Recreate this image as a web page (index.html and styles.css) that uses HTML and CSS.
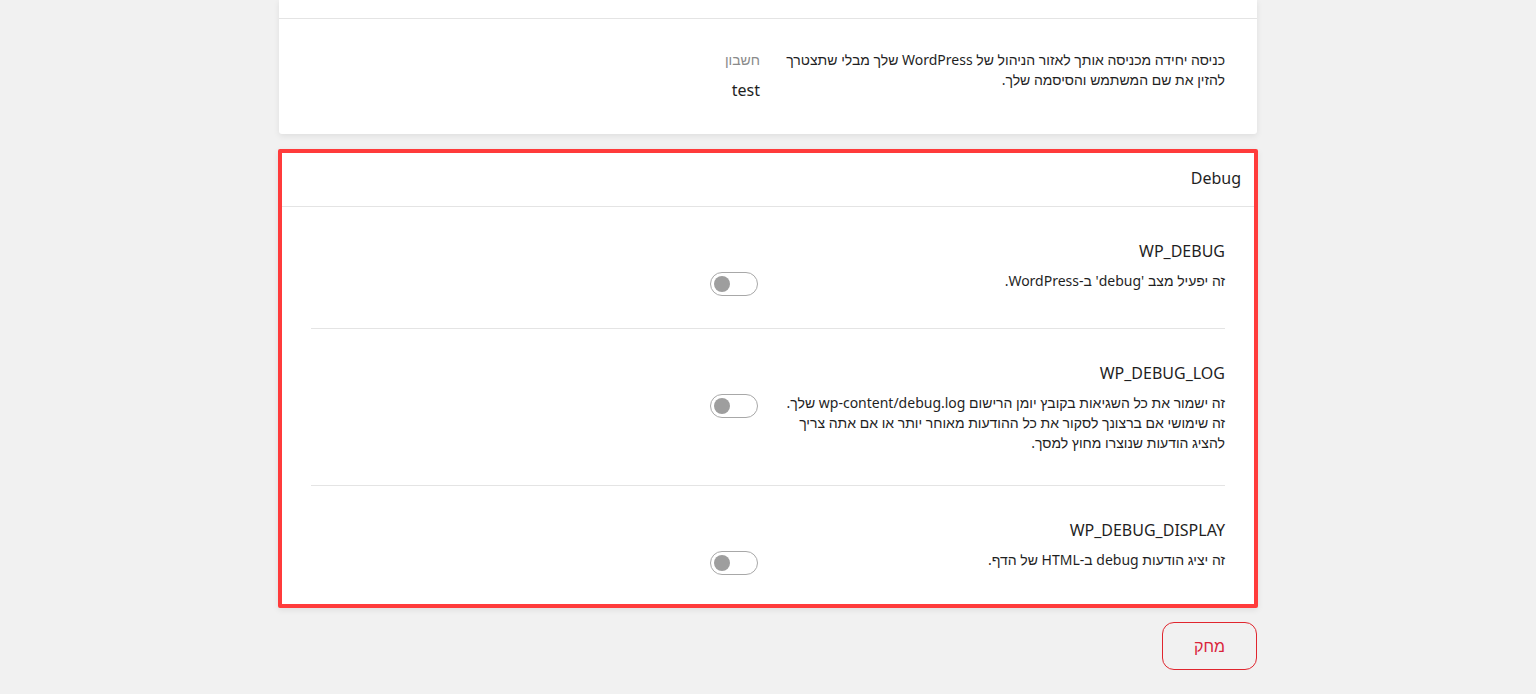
FILE: index.html
```html
<!DOCTYPE html>
<html lang="he" dir="rtl">
<head>
<meta charset="utf-8">
<title>Debug</title>
<link rel="stylesheet" href="styles.css">
</head>
<body>
<main class="page">
  <section class="card card-top">
    <div class="card-head-cut"></div>
    <div class="card-body">
      <div class="grid">
        <div class="col-text">
          <p class="desc">כניסה יחידה מכניסה אותך לאזור הניהול של WordPress שלך מבלי שתצטרך להזין את שם המשתמש והסיסמה שלך.</p>
        </div>
        <div class="col-field">
          <div class="field-label">חשבון</div>
          <div class="field-value">test</div>
        </div>
      </div>
    </div>
  </section>

  <section class="card card-debug">
    <header class="card-head">Debug</header>
    <div class="rows">
      <div class="row grid">
        <div class="col-text">
          <h3 class="title">WP_DEBUG</h3>
          <p class="desc">זה יפעיל מצב 'debug' ב-WordPress.</p>
        </div>
        <div class="col-field">
          <span class="toggle"><span class="knob"></span></span>
        </div>
      </div>
      <div class="row grid">
        <div class="col-text">
          <h3 class="title">WP_DEBUG_LOG</h3>
          <p class="desc">זה ישמור את כל השגיאות בקובץ יומן הרישום wp-content/debug.log שלך.<br>זה שימושי אם ברצונך לסקור את כל ההודעות מאוחר יותר או אם אתה צריך<br>להציג הודעות שנוצרו מחוץ למסך.</p>
        </div>
        <div class="col-field">
          <span class="toggle"><span class="knob"></span></span>
        </div>
      </div>
      <div class="row grid">
        <div class="col-text">
          <h3 class="title">WP_DEBUG_DISPLAY</h3>
          <p class="desc">זה יציג הודעות debug ב-HTML של הדף.</p>
        </div>
        <div class="col-field">
          <span class="toggle"><span class="knob"></span></span>
        </div>
      </div>
    </div>
  </section>

  <div class="actions">
    <button class="btn-delete" type="button">מחק</button>
  </div>
</main>
</body>
</html>
```

FILE: styles.css
```css
* { box-sizing: border-box; }

html, body {
  margin: 0;
  padding: 0;
  background: #f1f1f1;
}

body {
  font-family: "Noto Sans", "Liberation Sans", "Open Sans", sans-serif;
  color: #1f1f1f;
  font-size: 14px;
  line-height: 20px;
}

.page {
  width: 978px;
  margin: 0 auto;
}

.card {
  background: #ffffff;
  border-radius: 3px;
}

.card-top {
  border-radius: 0 0 3px 3px;
  box-shadow: 0 2px 6px rgba(0, 0, 0, 0.08);
}

.card-head-cut {
  height: 19px;
  border-bottom: 1px solid #e4e4e4;
}

.card-body {
  padding: 31px 32px 32px;
}

.grid {
  display: grid;
  grid-template-columns: 1fr 1fr;
  column-gap: 20px;
}

.desc {
  margin: 0;
  font-size: 14px;
  line-height: 20px;
  color: #1f1f1f;
}

.field-label {
  font-size: 14px;
  line-height: 20px;
  color: #8a8a8a;
  margin-right: -2px;
}

.field-value {
  margin-top: 8px;
  font-size: 16px;
  line-height: 24px;
  color: #1f1f1f;
  margin-right: -2px;
}

.card-debug {
  margin: 15px -1px 0;
  border: 4px solid #ff3b3b;
  border-radius: 2px;
  box-shadow: 0 2px 6px rgba(0, 0, 0, 0.08);
}

.card-head {
  padding: 13px 13px 16px;
  font-size: 16px;
  line-height: 24px;
  border-bottom: 1px solid #e4e4e4;
  color: #1f1f1f;
}

.rows {
  padding: 0 29px;
}

.row {
  padding: 32px 0;
  border-top: 1px solid #e4e4e4;
}

.row:first-child {
  border-top: none;
}

.row:last-child {
  padding-bottom: 29px;
}

.title {
  margin: 0;
  font-size: 16px;
  line-height: 24px;
  font-weight: 400;
  color: #1f1f1f;
}

.title + .desc {
  margin-top: 8px;
}

.row .col-field {
  padding-top: 33px;
}

.toggle {
  direction: ltr;
  display: flex;
  align-items: center;
  width: 48px;
  height: 24px;
  border: 1px solid #a8a8a8;
  border-radius: 12px;
  background: #ffffff;
  padding: 0 3px;
}

.knob {
  width: 16px;
  height: 16px;
  border-radius: 50%;
  background: #9e9e9e;
}

.actions {
  display: flex;
  margin-top: 14px;
}

.btn-delete {
  width: 95px;
  height: 48px;
  border: 1px solid #e0262e;
  border-radius: 12px;
  background: transparent;
  color: #d9243a;
  font-family: "Noto Sans", "Liberation Sans", "Open Sans", sans-serif;
  font-size: 16px;
  line-height: 24px;
  padding: 0;
}
```
